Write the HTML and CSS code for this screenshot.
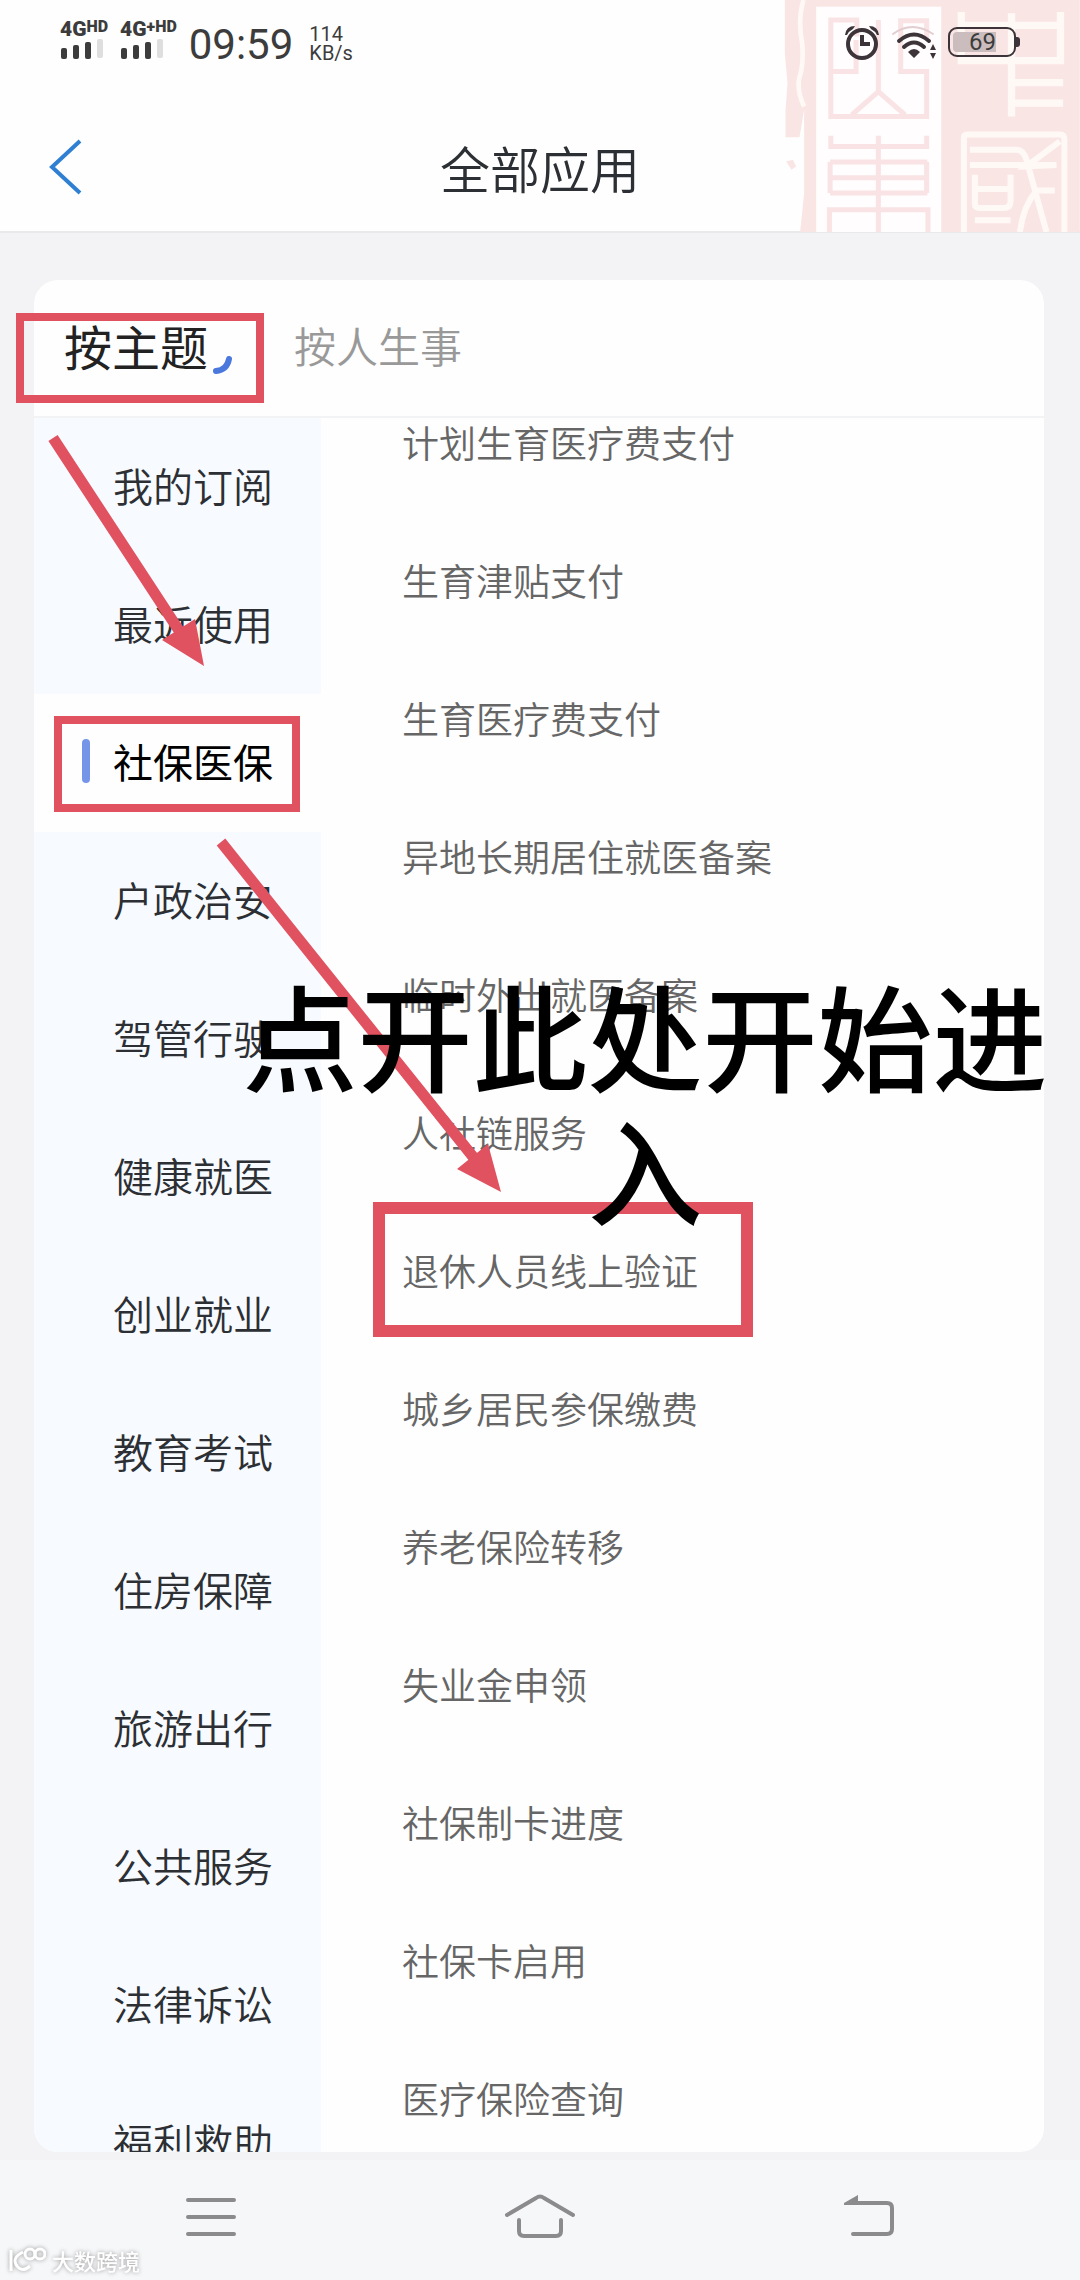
FILE: index.html
```
<!DOCTYPE html>
<html lang="zh-CN">

<head>
    <meta charset="UTF-8">
    <meta name="viewport" content="width=device-width, initial-scale=1.0">
    <title>全部应用</title>
    <link rel="stylesheet" href="styles.css">
</head>

<body>
    <!-- Header -->
    <header class="header">
        <svg class="seal" viewBox="0 0 1020 697" aria-hidden="true">
            <path class="seal-fill" d="M134 0H1020V697H180L192 580V330L178 412H136V330L142 250L134 160Z" />
            <path class="seal-fill" d="M138 485L158 480L168 500L154 510Z" />
            <path class="seal-line" stroke-width="14" d="M190 0Q172 60 186 130Q192 190 176 240Q172 280 192 320" />
            <rect class="seal-blank" x="228" y="20" width="376" height="677" />
            <g class="seal-pink">
                <path d="M350 110V60H272V215H348V120M272 215V350H560V215H482V62H560V120M415 60V275L335 345M415 275L495 345" />
                <path d="M272 408V440H560V408M415 408V697M270 487H562M270 534H562M270 580H562M270 487V580M560 487V580M268 697V630H564V697" />
            </g>
            <g class="seal-line" stroke-width="22">
                <path d="M664 36V182H962V36M664 76H962M815 40V350M820 248H970M820 310H970" />
                <path stroke-width="18" d="M672 697V412Q672 404 684 404H960Q974 404 974 420V697M690 450H830Q850 450 860 480L920 697M690 496H950L860 500L960 425M705 525V612Q705 625 720 625H790Q812 625 812 605V525M705 568H812M705 662H812M945 572H890Q850 620 840 697" />
            </g>
        </svg>

        <div class="status-bar">
            <div class="signal">
                <span class="network">4G<sup>HD</sup></span>
                <svg width="44" height="20" viewBox="0 0 44 20" aria-hidden="true">
                    <g fill="#3c3c3c">
                        <rect x="1" y="9" width="6" height="11" rx="2" />
                        <rect x="13" y="6" width="6" height="14" rx="2" />
                        <rect x="25" y="3" width="6" height="17" rx="2" />
                    </g>
                    <rect x="37" y="0" width="6" height="19" rx="2" fill="#dedede" />
                </svg>
            </div>
            <div class="signal">
                <span class="network">4G<sup>+HD</sup></span>
                <svg width="44" height="20" viewBox="0 0 44 20" aria-hidden="true">
                    <g fill="#3c3c3c">
                        <rect x="1" y="9" width="6" height="11" rx="2" />
                        <rect x="13" y="6" width="6" height="14" rx="2" />
                        <rect x="25" y="3" width="6" height="17" rx="2" />
                    </g>
                    <rect x="37" y="0" width="6" height="19" rx="2" fill="#dedede" />
                </svg>
            </div>
            <span class="time">09:59</span>
            <span class="speed">114<br>KB/s</span>

            <div class="status-icons">
                <svg width="36" height="36" viewBox="0 0 36 36" fill="none" stroke="#3c3438" aria-hidden="true">
                    <circle cx="18" cy="20" r="14" stroke-width="4" />
                    <path stroke-width="4" d="M18 11V20H26" />
                    <path fill="#3c3438" stroke="none" d="M1 11Q2 2 11 2L9 5Q5 7 3 11ZM35 11Q34 2 25 2L27 5Q31 7 33 11Z" />
                </svg>
                <svg width="44" height="36" viewBox="0 0 44 36" fill="none" stroke="#3c3438" stroke-linecap="round" aria-hidden="true">
                    <path stroke="#e3cdd0" stroke-width="2" d="M1 10Q20 -4 41 10" />
                    <path stroke-width="4" d="M7 17Q22 4 37 17M12 23Q22 14 32 23" />
                    <path fill="#3c3438" stroke="none" d="M16 28Q22 22 28 28L22 34ZM38 26L41 20L44 26ZM38 29L41 35L44 29Z" />
                </svg>
                <div class="battery"><span>69</span></div>
            </div>
        </div>

        <div class="title-bar">
            <button class="back-btn" aria-label="返回">
                <svg width="36" height="56" viewBox="0 0 36 56" fill="none" stroke="#2f80d2" stroke-width="4" aria-hidden="true">
                    <path d="M34 2L6 28L34 54" />
                </svg>
            </button>
            <h1>全部应用</h1>
        </div>
    </header>

    <!-- Application list -->
    <main class="card">
        <div class="tabs">
            <button class="tab active">按主题<svg width="22" height="20" viewBox="0 0 22 20" fill="none" aria-hidden="true">
                    <path stroke="#4b78dc" stroke-width="6" stroke-linecap="round" d="M4 16Q15 15 17 4" />
                </svg></button>
            <button class="tab">按人生事</button>
        </div>
        <div class="content">
            <nav class="sidebar">
                <a href="#">我的订阅</a>
                <a href="#">最近使用</a>
                <a href="#" class="selected">社保医保</a>
                <a href="#">户政治安</a>
                <a href="#">驾管行驶</a>
                <a href="#">健康就医</a>
                <a href="#">创业就业</a>
                <a href="#">教育考试</a>
                <a href="#">住房保障</a>
                <a href="#">旅游出行</a>
                <a href="#">公共服务</a>
                <a href="#">法律诉讼</a>
                <a href="#">福利救助</a>
            </nav>
            <div class="services">
                <a href="#">计划生育医疗费支付</a>
                <a href="#">生育津贴支付</a>
                <a href="#">生育医疗费支付</a>
                <a href="#">异地长期居住就医备案</a>
                <a href="#">临时外出就医备案</a>
                <a href="#">人社链服务</a>
                <a href="#">退休人员线上验证</a>
                <a href="#">城乡居民参保缴费</a>
                <a href="#">养老保险转移</a>
                <a href="#">失业金申领</a>
                <a href="#">社保制卡进度</a>
                <a href="#">社保卡启用</a>
                <a href="#">医疗保险查询</a>
            </div>
        </div>
    </main>

    <!-- System navigation -->
    <footer class="system-nav">
        <button aria-label="菜单">
            <svg width="72" height="48" viewBox="0 0 72 48" aria-hidden="true">
                <path d="M13 7H59M13 24H59M13 41H59" />
            </svg>
        </button>
        <button aria-label="主页">
            <svg width="72" height="48" viewBox="0 0 72 48" aria-hidden="true">
                <path d="M3 22L32 5Q36 2 40 5L69 22M15 27V38Q15 43 20 43H52Q57 43 57 38V27" />
            </svg>
        </button>
        <button aria-label="返回上一页">
            <svg width="72" height="48" viewBox="0 0 72 48" aria-hidden="true">
                <path d="M16 10H54Q59 10 59 15V36Q59 41 54 41H20" />
                <path class="arrow-tip" d="M11 10L25 2V12H11Z" />
            </svg>
        </button>
    </footer>

    <!-- Guide marks -->
    <svg class="marks" width="1080" height="1400" viewBox="0 0 1080 1400" aria-hidden="true">
        <g fill="none" stroke="#e05260">
            <rect x="20" y="317" width="240" height="82" stroke-width="8" />
            <rect x="58" y="720" width="238" height="88" stroke-width="8" />
            <rect x="379" y="1208" width="368" height="123" stroke-width="12" />
            <path stroke-width="11" d="M53 438L180 632M221 842L474 1158" />
        </g>
        <path fill="#e05260" d="M204 666L162 640L195 619ZM501 1192L457 1169L488 1144Z" />
    </svg>
    <p class="guide-text">点开此处开始进入</p>

    <div class="watermark">
        <svg width="38" height="28" viewBox="0 0 38 28" fill="none" stroke="#fff" stroke-width="3" aria-hidden="true">
            <path d="M3 4V25M15 6Q3 12 9 20Q14 27 22 20" />
            <circle cx="22" cy="8" r="5" />
            <circle cx="32" cy="8" r="5" />
        </svg>
        <span>大数跨境</span>
    </div>
</body>

</html>
```
FILE: styles.css
```
* {
    box-sizing: border-box;
}

body {
    margin: 0;
    height: 100vh;
    display: flex;
    flex-direction: column;
    position: relative;
    overflow: hidden;
    background-color: #f3f3f5;
    color: #2c2f33;
    font-family: "Noto Sans CJK SC", sans-serif;
    font-weight: 350;
}

button {
    padding: 0;
    border: none;
    background: none;
    color: inherit;
    font: inherit;
    cursor: pointer;
}

a {
    color: inherit;
    text-decoration: none;
}

svg {
    display: block;
}

/* Header */
.header {
    position: relative;
    height: 233px;
    background-color: #fefefe;
    border-bottom: 2px solid #e8e9eb;
}

.seal {
    position: absolute;
    top: 0;
    right: 0;
    width: 340px;
    height: 232px;
}

.seal-fill {
    fill: #fae5e5;
}

.seal-blank {
    fill: #fffdfd;
}

.seal-pink {
    fill: none;
    stroke: #f9e3e5;
    stroke-width: 15;
}

.seal-line {
    fill: none;
    stroke: #fff9f6;
}

/* Status bar */
.status-bar {
    position: relative;
    display: flex;
    align-items: center;
    height: 88px;
    padding: 0 64px 0 60px;
    color: #3c3c3c;
    font-family: Roboto, sans-serif;
    font-weight: 400;
}

.signal {
    margin-right: 12px;
    margin-bottom: 8px;
}

.network {
    display: flex;
    height: 18px;
    font-size: 21px;
    font-weight: 900;
    line-height: 16px;
}

.network sup {
    font-size: 16px;
    line-height: 12px;
}

.time {
    font-size: 42px;
}

.speed {
    margin-left: 16px;
    font-size: 20px;
    line-height: 19px;
}

.status-icons {
    display: flex;
    align-items: center;
    gap: 12px;
    margin-left: auto;
    margin-bottom: 4px;
}

.battery {
    position: relative;
    width: 68px;
    height: 30px;
    padding: 3px;
    border: 2px solid #3c3438;
    border-radius: 9px;
    font-size: 24px;
    line-height: 20px;
}

.battery span {
    display: block;
    width: 43px;
    border-radius: 4px 0 0 4px;
    background-color: #cbbcbd;
    text-align: right;
}

.battery::after {
    content: "";
    position: absolute;
    top: 8px;
    right: -6px;
    width: 4px;
    height: 10px;
    border-radius: 0 3px 3px 0;
    background-color: #3c3438;
}

/* Title */
.title-bar {
    position: relative;
    display: grid;
    grid-template-columns: 36px 1fr 36px;
    align-items: center;
    padding: 43px 46px 0;
}

.title-bar h1 {
    margin: 0;
    font-size: 50px;
    font-weight: 350;
    line-height: 72px;
    text-align: center;
}

/* Card */
.card {
    flex: 1;
    min-height: 0;
    display: flex;
    flex-direction: column;
    margin: 47px 36px 8px 34px;
    border-radius: 24px;
    background-color: #fefefe;
    overflow: hidden;
}

.tabs {
    display: flex;
    align-items: center;
    flex-shrink: 0;
    gap: 60px;
    height: 138px;
    padding: 0 30px 6px;
    border-bottom: 2px solid #f2f3f5;
}

.tab {
    color: #999;
    font-size: 42px;
    line-height: 60px;
}

.tab.active {
    display: flex;
    align-items: flex-end;
    gap: 4px;
    color: #222;
    font-size: 48px;
    font-weight: 400;
}

.content {
    flex: 1;
    min-height: 0;
    display: flex;
}

.sidebar {
    width: 287px;
    background-color: #f7fafe;
    overflow: hidden;
}

.sidebar a {
    display: flex;
    align-items: center;
    height: 138px;
    padding: 0 0 4px 79px;
    font-size: 40px;
}

.sidebar .selected {
    padding-left: 48px;
    background-color: #fefefe;
    color: #000;
    font-weight: 400;
}

.sidebar .selected::before {
    content: "";
    width: 8px;
    height: 44px;
    margin-right: 23px;
    border-radius: 4px;
    background-color: #7596e8;
}

/* The service list is scrolled part of a row */
.services {
    flex: 1;
    overflow: hidden;
    padding-left: 81px;
    color: #666;
    font-size: 37px;
}

.services a {
    display: flex;
    align-items: center;
    height: 138px;
}

.services a:first-child {
    height: 93px;
    padding-bottom: 45px;
}

/* System navigation */
.system-nav {
    display: flex;
    justify-content: space-around;
    height: 120px;
    padding: 33px 46px 0;
    background-color: #f6f7f9;
}

.system-nav button {
    height: 48px;
}

.system-nav path {
    fill: none;
    stroke: #8b8b8d;
    stroke-width: 4;
    stroke-linecap: round;
}

.system-nav .arrow-tip {
    fill: #8b8b8d;
    stroke: none;
}

/* Guide marks */
.marks {
    position: absolute;
    top: 0;
    left: 0;
    pointer-events: none;
}

.guide-text {
    position: absolute;
    top: 966px;
    left: 240px;
    width: 810px;
    margin: 0;
    color: #000;
    font-size: 115px;
    font-weight: 500;
    line-height: 134px;
    text-align: center;
    pointer-events: none;
}

.watermark {
    position: absolute;
    bottom: 4px;
    left: 8px;
    display: flex;
    align-items: center;
    gap: 6px;
    color: #fff;
    font-size: 22px;
    font-weight: 500;
    filter: drop-shadow(0 0 2px #999);
}
```
